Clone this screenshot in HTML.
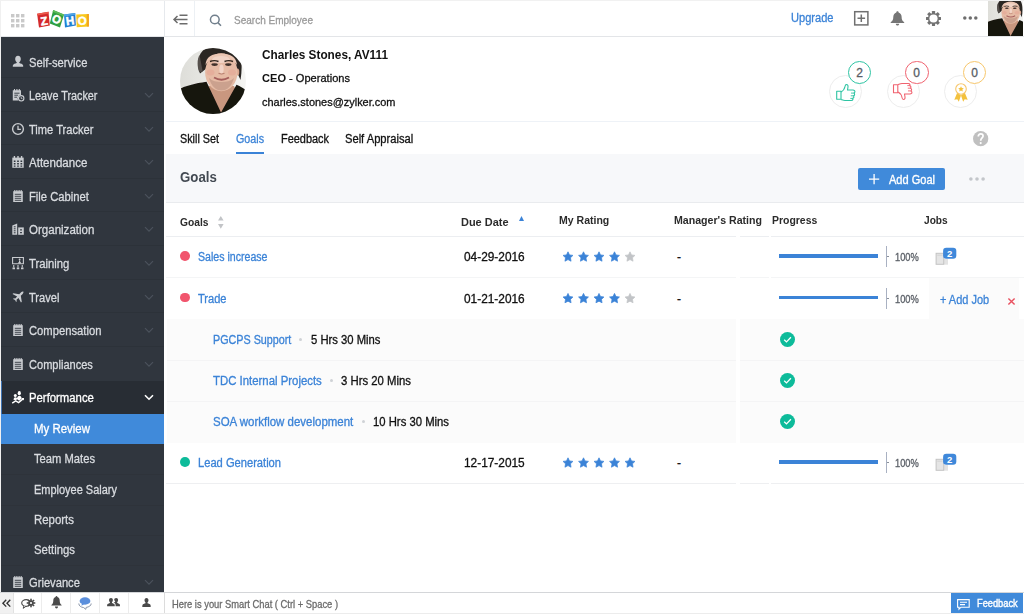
<!DOCTYPE html>
<html><head><meta charset="utf-8"><title>Goals</title>
<style>
*{box-sizing:border-box;margin:0;padding:0}
html,body{width:1024px;height:614px;overflow:hidden;background:#fff;font-family:"Liberation Sans",sans-serif;color:#111}
.a{position:absolute}
svg{position:absolute;overflow:visible}
.t{position:absolute;white-space:nowrap;transform-origin:0 50%;display:block}
#side{position:absolute;left:1px;top:36.5px;width:162.5px;height:556px;background:#30363e;overflow:hidden}
.mi{position:absolute;left:0;width:163px;height:33.6px;border-top:1px solid #2c3239}
.si{position:absolute;left:0;width:163px;height:30.4px;border-top:1px solid #2c3138}
.hl{position:absolute;height:1px;background:#eceef1}
.vl{position:absolute;width:1px;background:#e6e9ed}
.bar{position:absolute;left:779.2px;width:98.4px;height:3.5px;background:#3b83d7}
.tick{position:absolute;left:885.6px;width:1px;height:21px;background:#a9b1c2}
.dash{position:absolute;left:887px;width:2.4px;height:1px;background:#8a909a}
.dot{position:absolute;width:9.8px;height:9.8px;border-radius:50%}
.sdot{position:absolute;width:3px;height:3px;border-radius:50%;background:#cfd2d6}

</style></head><body>
<svg width="0" height="0" style="position:absolute"><defs>
<filter id="bl" x="-5%" y="-5%" width="110%" height="110%"><feGaussianBlur stdDeviation="0.6"/></filter>
<linearGradient id="abg" x1="0" x2="1" y1="0" y2="0"><stop offset="0" stop-color="#dcdcd7"/><stop offset=".6" stop-color="#ecece9"/><stop offset="1" stop-color="#f6f6f4"/></linearGradient>
<g id="face">
<rect x="-4" y="-4" width="74" height="74" fill="url(#abg)"/>
<g filter="url(#bl)">
<path d="M20 25.5C17 18 17.5 8 22.5 3C27 -2 53 -3 58 3C62 8 62.5 20 60.5 32L56 22 27 20z" fill="#2b2624"/>
<path d="M19.5 7c-2.5 4-2.5 12-.3 17l3.5-.5z" fill="#55504c"/>
<path d="M29 38H54L56 42 41 66 27 44z" fill="#c9977f"/>
<ellipse cx="57.5" cy="24" rx="1.8" ry="3.5" fill="#d9a68f"/>
<ellipse cx="41.3" cy="24.3" rx="16.2" ry="19" fill="#e6bba5"/>
<path d="M25.5 17C26 9 32 5.5 41 5.5S56.5 9 57 17C52 10 47 8.5 41 8.5S30 10 25.5 17z" fill="#ebc6b3"/>
<ellipse cx="41" cy="11.5" rx="9" ry="3.5" fill="#f3d8cb" opacity=".85"/>
<ellipse cx="41.5" cy="21" rx="2.2" ry="4.5" fill="#f3d8cc" opacity=".85"/>
<ellipse cx="30.5" cy="24.5" rx="4" ry="3" fill="#e39b8b" opacity=".4"/>
<ellipse cx="52" cy="24.5" rx="4" ry="3" fill="#e39b8b" opacity=".4"/>
<path d="M29 30c2 8 7 12.5 12.5 12.5S52 38 54 30c-3 3-8 4-12.5 4S32 33 29 30z" fill="#b48c7b" opacity=".55"/>
<ellipse cx="34.6" cy="16.6" rx="3.2" ry="1.3" fill="#3f302c"/>
<ellipse cx="48.3" cy="16.6" rx="3.2" ry="1.3" fill="#3f302c"/>
<path d="M30 13.5q4.2-1.8 8.5 0M44.5 13.5q4.2-1.8 8.5 0" stroke="#33271f" stroke-width="1.4" fill="none"/>
<path d="M38.5 25.4q3 1.3 6 0" stroke="#b57c6c" stroke-width="1" fill="none"/>
<path d="M34 29.5q7.5 4.5 15 0" stroke="#a55f5c" stroke-width="1.8" fill="none"/>
<path d="M-4 43C3 38.5 14 35.5 26.5 33.8L41 64.5 56.5 36.8C61 38.5 66 42 70 45V70H-4z" fill="#17130f"/>
</g></g>
</defs></svg>

<!-- ===== top bar ===== -->
<div class="a" style="left:0;top:0;width:1024px;height:36px;background:#fff"></div>
<div class="a" style="left:0;top:36px;width:1024px;height:1px;background:#e3e5e8"></div>
<div class="vl" style="left:163.5px;top:0;height:36px"></div>
<div class="vl" style="left:194px;top:0;height:36px;background:#ecf0f4"></div>
<svg style="left:11.2px;top:13.9px" width="14" height="14" viewBox="0 0 14 14" fill="#c9c9c9"><rect x="0" y="0" width="3.4" height="3.4"/><rect x="5" y="0" width="3.4" height="3.4"/><rect x="10" y="0" width="3.4" height="3.4"/><rect x="0" y="5" width="3.4" height="3.4"/><rect x="5" y="5" width="3.4" height="3.4"/><rect x="10" y="5" width="3.4" height="3.4"/><rect x="0" y="10" width="3.4" height="3.4"/><rect x="5" y="10" width="3.4" height="3.4"/><rect x="10" y="10" width="3.4" height="3.4"/></svg>
<!-- zoho logo -->
<svg style="left:0;top:0" width="100" height="36" viewBox="0 0 100 36">
<path d="M37.1 13.7L48.5 11.7 49.8 25.6 39 27.6z" fill="#d42a2c"/>
<path d="M37.1 13.7L48.5 11.7 48.7 13.4 37.4 15.5z" fill="#ec5a4c"/>
<path d="M53.2 10L64 14.6 60 27.6 49.8 23.4z" fill="#2f9f40"/>
<path d="M53.2 10L64 14.6 63.5 16.3 52.6 11.8z" fill="#5cbb5a"/>
<path d="M64 14.6L75.2 13 75.9 25.6 65 27.6z" fill="#2180d2"/>
<path d="M64 14.6L75.2 13 75.3 14.7 64.1 16.4z" fill="#4fa3e6"/>
<path d="M76.2 14.6L88.9 14 88.9 26.4 76.7 27.3z" fill="#f8c81c"/>
<path d="M86.8 14.1L88.9 14 88.9 26.4 86.8 26.6z" fill="#f2a420"/>
<g fill="#fff" stroke="#fff" stroke-width=".5" font-family="Liberation Sans, sans-serif" font-weight="700" font-size="11.5" text-anchor="middle">
<text x="44" y="25" transform="rotate(-9 44 21)">Z</text>
<text x="56.8" y="23.3" transform="rotate(22 56.8 19)">O</text>
<text x="70.2" y="24.8" transform="rotate(-8 70 21)">H</text>
<text x="82.3" y="24.8" transform="rotate(-3 82 21)">O</text>
</g></svg>
<!-- collapse icon -->
<svg style="left:173px;top:13.6px" width="15" height="11" viewBox="0 0 15 11" fill="none" stroke="#6c6c6c" stroke-width="1.5"><path d="M6.5 1.2H14.5M1 5.5H14.5M6.5 9.8H14.5M4.5 2L1 5.5 4.5 9"/></svg>
<!-- search -->
<svg style="left:209px;top:14.1px" width="13" height="13" viewBox="0 0 13 13" fill="none" stroke="#717f8c" stroke-width="1.5"><circle cx="5.8" cy="5.5" r="4.35"/><path d="M8.9 8.6L12 11.7"/></svg>
<!-- plus box -->
<svg style="left:854.3px;top:10.8px" width="15" height="15" viewBox="0 0 15 15" fill="none" stroke="#707070" stroke-width="1.5"><rect x=".7" y=".7" width="13.2" height="13.2"/><path d="M7.3 3.5V11.1M3.5 7.3H11.1"/></svg>
<!-- bell -->
<svg style="left:889.8px;top:11px" width="15" height="15" viewBox="0 0 15 15" fill="#757575"><path d="M7.5 0.3c.7 0 1.1.5 1.1 1.1 2 .6 3 2.3 3 4.4 0 3 .9 4.2 2.6 5.4v.7H.7v-.7C2.4 10 3.3 8.8 3.3 5.8c0-2.1 1-3.8 3-4.4C6.3.8 6.8.3 7.5.3z"/><path d="M5.8 12.8h3.4c0 1-.8 1.8-1.7 1.8s-1.7-.8-1.7-1.8z"/></svg>
<!-- gear -->
<svg style="left:926px;top:10.5px" width="15" height="15" viewBox="-7.5 -7.5 15 15"><g fill="#727272"><rect x="-1.6" y="-7.5" width="3.2" height="15" rx=".4"/><rect x="-1.6" y="-7.5" width="3.2" height="15" rx=".4" transform="rotate(45)"/><rect x="-1.6" y="-7.5" width="3.2" height="15" rx=".4" transform="rotate(90)"/><rect x="-1.6" y="-7.5" width="3.2" height="15" rx=".4" transform="rotate(135)"/><circle r="5.6"/></g><circle r="4.1" fill="#fff"/></svg>
<!-- top dots -->
<svg style="left:962.7px;top:16.1px" width="15" height="4" viewBox="0 0 15 4" fill="#6e6e6e"><circle cx="1.8" cy="1.9" r="1.75"/><circle cx="7.3" cy="1.9" r="1.75"/><circle cx="12.8" cy="1.9" r="1.75"/></svg>
<!-- small avatar -->
<svg style="left:987.5px;top:.8px;overflow:hidden" width="35.3" height="35" viewBox="1.9 4 61.2 60.7"><use href="#face"/></svg>

<!-- ===== sidebar ===== -->
<div id="side">
<svg style="left:10px;top:18.5px" width="14" height="14" viewBox="0 0 14 14"><path d="M7 .7c1.9 0 2.8 1.4 2.8 3.2 0 1.3-.6 2.6-1.5 3.2v.9c1.5.5 3.4 1.1 3.7 2 .2.6.2 1.7.2 1.7H1.8c0 0 0-1.1.2-1.7.3-.9 2.2-1.5 3.7-2v-.9C4.8 6.5 4.2 5.2 4.2 3.9 4.2 2.1 5.1.7 7 .7z" fill="#c9ccd0"/></svg>
<div class="mi" style="top:40.6px"></div>
<svg style="left:10px;top:51.5px" width="14" height="14" viewBox="0 0 14 14"><path d="M1.8 2.3h8.2v4.8a3.6 3.6 0 0 0-2.8 5.4H1.8z" fill="#c9ccd0"/><path d="M3.5 1v2M5.9 1v2M8.3 1v2" stroke="#c9ccd0" stroke-width="1.1"/><path d="M3.3 5.2h5.2M3.3 7.2h3.8M3.3 9.2h2.8" stroke="#30363e" stroke-width=".9"/><circle cx="10.2" cy="10.3" r="2.7" fill="none" stroke="#c9ccd0" stroke-width="1.1"/><path d="M10.2 9v1.5h1.2" stroke="#c9ccd0" stroke-width=".8" fill="none"/></svg>
<svg style="left:143px;top:55.0px" width="10" height="7" viewBox="0 0 10 7"><path d="M1 1.2L5 5.2 9 1.2" fill="none" stroke="#4b525c" stroke-width="1.2"/></svg>
<div class="mi" style="top:74.6px"></div>
<svg style="left:10px;top:85.5px" width="14" height="14" viewBox="0 0 14 14"><circle cx="7" cy="7" r="5.4" fill="none" stroke="#c9ccd0" stroke-width="1.4"/><path d="M7 3.7v3.6h2.9" stroke="#c9ccd0" stroke-width="1.3" fill="none"/></svg>
<svg style="left:143px;top:89.0px" width="10" height="7" viewBox="0 0 10 7"><path d="M1 1.2L5 5.2 9 1.2" fill="none" stroke="#4b525c" stroke-width="1.2"/></svg>
<div class="mi" style="top:107.6px"></div>
<svg style="left:10px;top:118.5px" width="14" height="14" viewBox="0 0 14 14"><path d="M1.3 2.6h11.4v10.2H1.3z" fill="#c9ccd0"/><path d="M3.4 1v2.5M7 1v2.5M10.6 1v2.5" stroke="#c9ccd0" stroke-width="1.4"/><path d="M2.8 5.4h1.7v1.5H2.8zM6.15 5.4h1.7v1.5H6.15zM9.5 5.4h1.7v1.5H9.5zM2.8 7.9h1.7v1.5H2.8zM6.15 7.9h1.7v1.5H6.15zM9.5 7.9h1.7v1.5H9.5zM2.8 10.4h1.7v1.4H2.8zM6.15 10.4h1.7v1.4H6.15zM9.5 10.4h1.7v1.4H9.5z" fill="#30363e"/></svg>
<svg style="left:143px;top:122.0px" width="10" height="7" viewBox="0 0 10 7"><path d="M1 1.2L5 5.2 9 1.2" fill="none" stroke="#4b525c" stroke-width="1.2"/></svg>
<div class="mi" style="top:141.6px"></div>
<svg style="left:10px;top:152.5px" width="14" height="14" viewBox="0 0 14 14"><path d="M2.2 2.2h9.6v10.8H2.2z" fill="#c9ccd0"/><path d="M3.8 1v2M5.9 1v2M8.1 1v2M10.2 1v2" stroke="#c9ccd0" stroke-width="1.1"/><path d="M3.8 5.3h6.4M3.8 7.3h6.4M3.8 9.3h6.4M3.8 11.3h6.4" stroke="#30363e" stroke-width=".9"/></svg>
<svg style="left:143px;top:156.0px" width="10" height="7" viewBox="0 0 10 7"><path d="M1 1.2L5 5.2 9 1.2" fill="none" stroke="#4b525c" stroke-width="1.2"/></svg>
<div class="mi" style="top:174.6px"></div>
<svg style="left:10px;top:185.5px" width="14" height="14" viewBox="0 0 14 14"><path d="M1.3 3.6L6.2 1.4V12.8H1.3z" fill="#c9ccd0"/><path d="M7.2 5.4h5.6v7.4H7.2z" fill="#c9ccd0"/><path d="M2.8 4.8h1.8M2.8 6.8h1.8M2.8 8.8h1.8M2.8 10.8h1.8" stroke="#30363e" stroke-width="1"/><path d="M9.1 7.3h1.8v1.3H9.1zM9.1 9.9h1.8v1.3H9.1z" fill="#30363e"/></svg>
<svg style="left:143px;top:189.0px" width="10" height="7" viewBox="0 0 10 7"><path d="M1 1.2L5 5.2 9 1.2" fill="none" stroke="#4b525c" stroke-width="1.2"/></svg>
<div class="mi" style="top:208.6px"></div>
<svg style="left:10px;top:219.5px" width="14" height="14" viewBox="0 0 14 14"><path d="M1.6 1.5h10.8v6.3H1.6z" fill="none" stroke="#c9ccd0" stroke-width="1.1"/><path d="M8.6 4.4v2.4M7.2 6.9h2.8" stroke="#c9ccd0" stroke-width="1.2"/><circle cx="8.6" cy="3.5" r=".9" fill="#c9ccd0"/><path d="M1.5 13.3v-1.7h2.5v1.7zM5.75 13.3v-1.7h2.5v1.7zM10 13.3v-1.7h2.5v1.7z" fill="#c9ccd0"/><path d="M2.75 9v2.4M7 9v2.4M11.25 9v2.4" stroke="#c9ccd0" stroke-width="1.1"/></svg>
<svg style="left:143px;top:223.0px" width="10" height="7" viewBox="0 0 10 7"><path d="M1 1.2L5 5.2 9 1.2" fill="none" stroke="#4b525c" stroke-width="1.2"/></svg>
<div class="mi" style="top:242.6px"></div>
<svg style="left:10px;top:253.5px" width="14" height="14" viewBox="0 0 14 14"><g transform="translate(.6 .8) scale(.92)"><path d="M12.9 1.1c-.6-.6-1.9-.1-2.6.6L8.3 3.7 1.9 2.6l-.9.9 5 2.7-2 2.2-1.7-.3-.7.7 2.2 1.1 1.1 2.2.7-.7-.3-1.7 2.2-2 2.7 5 .9-.9-1.1-6.4 2-2c.7-.7 1.2-2 .6-2.6z" fill="#c9ccd0"/></g></svg>
<svg style="left:143px;top:257.0px" width="10" height="7" viewBox="0 0 10 7"><path d="M1 1.2L5 5.2 9 1.2" fill="none" stroke="#4b525c" stroke-width="1.2"/></svg>
<div class="mi" style="top:275.6px"></div>
<svg style="left:10px;top:286.5px" width="14" height="14" viewBox="0 0 14 14"><path d="M2.2 2.2h9.6v10.8H2.2z" fill="#c9ccd0"/><path d="M3.8 1v2M5.9 1v2M8.1 1v2M10.2 1v2" stroke="#c9ccd0" stroke-width="1.1"/><path d="M3.8 5.3h6.4M3.8 7.3h6.4M3.8 9.3h6.4M3.8 11.3h6.4" stroke="#30363e" stroke-width=".9"/></svg>
<svg style="left:143px;top:290.0px" width="10" height="7" viewBox="0 0 10 7"><path d="M1 1.2L5 5.2 9 1.2" fill="none" stroke="#4b525c" stroke-width="1.2"/></svg>
<div class="mi" style="top:309.6px"></div>
<svg style="left:10px;top:320.5px" width="14" height="14" viewBox="0 0 14 14"><path d="M2.2 2.2h9.6v10.8H2.2z" fill="#c9ccd0"/><path d="M3.8 1v2M5.9 1v2M8.1 1v2M10.2 1v2" stroke="#c9ccd0" stroke-width="1.1"/><path d="M3.8 5.3h6.4M3.8 7.3h6.4M3.8 9.3h6.4M3.8 11.3h6.4" stroke="#30363e" stroke-width=".9"/></svg>
<svg style="left:143px;top:324.0px" width="10" height="7" viewBox="0 0 10 7"><path d="M1 1.2L5 5.2 9 1.2" fill="none" stroke="#4b525c" stroke-width="1.2"/></svg>
<div class="a" style="left:0;top:344.0px;width:163px;height:33.2px;background:#282d34"></div>
<div class="a" style="left:0;top:344.0px;width:1px;height:33.2px;background:#3f74b3"></div>
<svg style="left:10px;top:353.0px" width="14" height="14" viewBox="0 0 14 14"><ellipse cx="8.3" cy="3.2" rx="1.6" ry="2.1" fill="#fff"/><circle cx="4.3" cy="5.4" r="1.5" fill="#fff"/><path d="M2.5 9.8c.2-1.7 1-2.5 1.9-2.5.8 0 1.3.4 1.6 1 .4-1.7 1.2-2.6 2.3-2.6 1.4 0 2.2 1.2 2.4 2.8L8.2 10.7 6.2 9.3 4.6 10.3z" fill="#fff"/><path d="M1.2 13.2L4.7 10.8 7.6 12.6 12.3 8.6" stroke="#fff" stroke-width="1.4" fill="none"/><path d="M10.4 8.1l2.6-.2-.2 2.6z" fill="#fff"/></svg>
<svg style="left:143px;top:357.2px" width="10" height="7" viewBox="0 0 10 7"><path d="M1 1.2L5 5.2 9 1.2" fill="none" stroke="#fff" stroke-width="1.6"/></svg>
<div class="a" style="left:0;top:377.2px;width:163px;height:30px;background:#408ada"></div>
<div class="a" style="left:0;top:437.5px;width:163px;height:1px;background:#2e333a"></div>
<div class="a" style="left:0;top:468.0px;width:163px;height:1px;background:#2e333a"></div>
<div class="a" style="left:0;top:498.5px;width:163px;height:1px;background:#2e333a"></div>
<div class="a" style="left:0;top:528.8px;width:163px;height:1px;background:#2e333a"></div>
<svg style="left:10px;top:538.5px" width="14" height="14" viewBox="0 0 14 14"><path d="M2.2 2.2h9.6v10.8H2.2z" fill="#c9ccd0"/><path d="M3.8 1v2M5.9 1v2M8.1 1v2M10.2 1v2" stroke="#c9ccd0" stroke-width="1.1"/><path d="M3.8 5.3h6.4M3.8 7.3h6.4M3.8 9.3h6.4M3.8 11.3h6.4" stroke="#30363e" stroke-width=".9"/></svg>
<svg style="left:143px;top:542.0px" width="10" height="7" viewBox="0 0 10 7"><path d="M1 1.2L5 5.2 9 1.2" fill="none" stroke="#4b525c" stroke-width="1.2"/></svg>
</div>
<div class="a" style="left:0;top:0;width:1px;height:614px;background:#f0f0f0"></div>
<div class="a" style="left:0;top:0;width:1024px;height:1px;background:#f1f1f1"></div>

<!-- ===== profile ===== -->
<svg style="left:179.5px;top:47.5px;overflow:hidden;border-radius:50%" width="66" height="66" viewBox="0 0 66 66"><use href="#face"/></svg>
<div class="hl" style="left:166px;top:120.5px;width:858px;background:#eef2f7"></div>
<div class="a" style="left:829.1px;top:74.6px;width:33px;height:33px;border-radius:50%;border:1px solid #ededed;background:#fff"></div>
<svg style="left:835.5px;top:84px" width="20" height="16" viewBox="0 0 20 16" fill="none" stroke="#2ec4a3" stroke-width="1.1" stroke-linejoin="round"><path d="M.7 7.2h4.3v8H.7z"/><path d="M5 8c2-1 3.5-3 4-5.5.2-1.4.6-2 1.5-2 1.2 0 1.7 1 1.5 2.5L11.5 6h5.5c1.3 0 2 .8 1.9 1.8-.1.7-.5 1.1-1.1 1.3.6.3.9.8.8 1.5-.1.7-.6 1.1-1.2 1.2.4.4.6.8.5 1.4-.1.7-.7 1.1-1.3 1.2.3.3.4.7.3 1.1-.2.8-.9 1-1.7 1H9c-1.5 0-2.5-.5-4-1"/><path d="M15 9.1h2.6M14.8 11.8h2.4M14.3 14.4h2.2" stroke-width=".9"/></svg>
<div class="a" style="left:847.8px;top:60.7px;width:23.4px;height:23.4px;border-radius:50%;border:1.2px solid #2ec4a3;background:#fff"></div>
<svg style="left:848.0px;top:60.7px" width="23" height="23" viewBox="0 0 23 23"><text x="11.5" y="16.4" text-anchor="middle" font-family="Liberation Sans, sans-serif" font-size="12" fill="#575d66" stroke="#575d66" stroke-width=".3">2</text></svg>
<div class="a" style="left:886.5px;top:74.6px;width:33px;height:33px;border-radius:50%;border:1px solid #ededed;background:#fff"></div>
<svg style="left:892.5px;top:83.7px" width="20" height="16" viewBox="0 0 20 16" fill="none" stroke="#f0626f" stroke-width="1.1" stroke-linejoin="round"><g transform="translate(20 16) rotate(180)"><path d="M.7 7.2h4.3v8H.7z" transform="translate(14.5 0)"/><path d="M15 8c-2-1-3.5-3-4-5.5C10.8 1.1 10.4.5 9.5.5 8.3.5 7.8 1.5 8 3L8.5 6H3C1.7 6 1 6.8 1.1 7.8c.1.7.5 1.1 1.1 1.3-.6.3-.9.8-.8 1.5.1.7.6 1.1 1.2 1.2-.4.4-.6.8-.5 1.4.1.7.7 1.1 1.3 1.2-.3.3-.4.7-.3 1.1.2.8.9 1 1.7 1H11c1.5 0 2.5-.5 4-1"/><path d="M5 9.1H2.4M5.2 11.8H2.8M5.7 14.4H3.5" stroke-width=".9"/></g></svg>
<div class="a" style="left:905.2px;top:60.7px;width:23.4px;height:23.4px;border-radius:50%;border:1.2px solid #f0626f;background:#fff"></div>
<svg style="left:905.4px;top:60.7px" width="23" height="23" viewBox="0 0 23 23"><text x="11.5" y="16.4" text-anchor="middle" font-family="Liberation Sans, sans-serif" font-size="12" fill="#575d66" stroke="#575d66" stroke-width=".3">0</text></svg>
<div class="a" style="left:943.6px;top:74.6px;width:33px;height:33px;border-radius:50%;border:1px solid #ededed;background:#fff"></div>
<svg style="left:953.6px;top:83px" width="14" height="19" viewBox="0 0 14 19"><path d="M3.3 9.5L.3 16.8 3.3 16.2 4.8 18.8 7 12.5zM10.7 9.5L13.7 16.8 10.7 16.2 9.2 18.8 7 12.5z" fill="#f3c13c"/><circle cx="7" cy="6" r="5.3" fill="#fff" stroke="#f7c76c" stroke-width="1.1"/><path d="M7 3.2l.85 1.8 1.95.25-1.4 1.35.35 1.95L7 7.6l-1.75.95.35-1.95-1.4-1.35 1.95-.25z" fill="#f3c13c"/></svg>
<div class="a" style="left:962.7px;top:60.7px;width:23.4px;height:23.4px;border-radius:50%;border:1.2px solid #f7c76c;background:#fff"></div>
<svg style="left:962.9px;top:60.7px" width="23" height="23" viewBox="0 0 23 23"><text x="11.5" y="16.4" text-anchor="middle" font-family="Liberation Sans, sans-serif" font-size="12" fill="#575d66" stroke="#575d66" stroke-width=".3">0</text></svg>
<!-- help -->
<svg style="left:972.7px;top:130.9px" width="15.3" height="15.3" viewBox="0 0 15.3 15.3"><circle cx="7.65" cy="7.65" r="7.65" fill="#c0c0c0"/><path d="M5.3 5.5C5.3 3.7 6.3 2.9 7.7 2.9 9.2 2.9 10.1 3.8 10.1 5 10.1 6.9 7.7 7.1 7.7 9.7" fill="none" stroke="#fff" stroke-width="1.7"/><circle cx="7.7" cy="12.1" r="1.05" fill="#fff"/></svg>
<!-- tab underline -->
<div class="a" style="left:235.5px;top:152.3px;width:28.3px;height:2px;background:#3b83d7"></div>

<!-- ===== goals band ===== -->
<div class="a" style="left:165.5px;top:154.3px;width:858.5px;height:48px;background:#f7f8fa"></div>
<div class="hl" style="left:166px;top:202.2px;width:858px;background:#e9ebee"></div>
<div class="a" style="left:857.6px;top:168px;width:87.9px;height:21.5px;background:#408ada;border-radius:2px"></div>
<svg style="left:869.4px;top:173.9px" width="10.2" height="10.2" viewBox="0 0 10.2 10.2" stroke="#fff" stroke-width="1.3"><path d="M5.1 0V10.2M0 5.1H10.2"/></svg>
<svg style="left:969px;top:177px" width="16" height="4" viewBox="0 0 16 4" fill="#c3c6ca"><circle cx="1.9" cy="2" r="1.8"/><circle cx="8" cy="2" r="1.8"/><circle cx="14.1" cy="2" r="1.8"/></svg>

<!-- ===== table ===== -->
<svg style="left:218.3px;top:216.1px" width="5.6" height="12.7" viewBox="0 0 5.6 12.7" fill="#c2c4c7"><path d="M2.8 0L5.6 4.6H0zM2.8 12.7L5.6 8H0z"/></svg>
<svg style="left:519.3px;top:216.1px" width="5" height="5" viewBox="0 0 5 5" fill="#3b83d7"><path d="M2.5 0L5 5H0z"/></svg>
<div class="hl" style="left:166px;top:235.7px;width:858px"></div>
<div class="hl" style="left:166px;top:277px;width:858px;background:#f4f5f6"></div>
<div class="hl" style="left:166px;top:483px;width:858px;background:#eeeff1"></div>
<!-- sub rows bg -->
<div class="a" style="left:166.5px;top:319px;width:857.5px;height:124px;background:#fbfbfb"></div>
<div class="a" style="left:929.2px;top:278px;width:89.6px;height:41px;background:#fbfbfb"></div>
<div class="hl" style="left:166.5px;top:360px;width:857.5px;background:#f4f4f5"></div>
<div class="hl" style="left:166.5px;top:400.7px;width:857.5px;background:#f4f4f5"></div>
<div class="a" style="left:735.8px;top:235px;width:4.4px;height:249px;background:#fff"></div>
<div class="a" style="left:769.3px;top:235px;width:1.5px;height:3px;background:#fff"></div>
<div class="a" style="left:769.3px;top:276px;width:1.5px;height:3px;background:#fff"></div>
<div class="a" style="left:769.3px;top:482px;width:1.5px;height:3px;background:#fff"></div>
<div class="dot" style="left:179.8px;top:251.1px;background:#f1556d"></div>
<svg style="left:0;top:0" width="1024" height="614"><polygon points="568.00,251.80 569.53,254.90 572.95,255.39 570.47,257.80 571.06,261.21 568.00,259.60 564.94,261.21 565.53,257.80 563.05,255.39 566.47,254.90" fill="#3b83d7" stroke="#3b83d7" stroke-width=".7" stroke-linejoin="round"/><polygon points="583.50,251.80 585.03,254.90 588.45,255.39 585.97,257.80 586.56,261.21 583.50,259.60 580.44,261.21 581.03,257.80 578.55,255.39 581.97,254.90" fill="#3b83d7" stroke="#3b83d7" stroke-width=".7" stroke-linejoin="round"/><polygon points="599.00,251.80 600.53,254.90 603.95,255.39 601.47,257.80 602.06,261.21 599.00,259.60 595.94,261.21 596.53,257.80 594.05,255.39 597.47,254.90" fill="#3b83d7" stroke="#3b83d7" stroke-width=".7" stroke-linejoin="round"/><polygon points="614.50,251.80 616.03,254.90 619.45,255.39 616.97,257.80 617.56,261.21 614.50,259.60 611.44,261.21 612.03,257.80 609.55,255.39 612.97,254.90" fill="#3b83d7" stroke="#3b83d7" stroke-width=".7" stroke-linejoin="round"/><polygon points="630.00,251.80 631.53,254.90 634.95,255.39 632.47,257.80 633.06,261.21 630.00,259.60 626.94,261.21 627.53,257.80 625.05,255.39 628.47,254.90" fill="#c2c4c7" stroke="#c2c4c7" stroke-width=".7" stroke-linejoin="round"/></svg>
<div class="bar" style="top:254.2px"></div>
<div class="tick" style="top:246.1px"></div>
<div class="dash" style="top:256.2px"></div>
<svg style="left:935px;top:247.9px" width="24" height="18" viewBox="0 0 24 18"><path d="M9 10.8h4v5.9H9z" fill="#e3e3e3"/><rect x="1.1" y="5.3" width="7.6" height="11" fill="#e5e5e5" stroke="#c3c3c3" stroke-width="1"/><path d="M2.3 7.2h5.2" stroke="#d2d2d2" stroke-width="1"/><rect x="8.1" y="-.2" width="13.2" height="11" rx="3.2" fill="#3f88da"/><text x="14.7" y="8.7" text-anchor="middle" font-family="Liberation Sans, sans-serif" font-weight="700" font-size="9.5" fill="#fff">2</text></svg>
<div class="dot" style="left:179.8px;top:292.7px;background:#f1556d"></div>
<svg style="left:0;top:0" width="1024" height="614"><polygon points="568.00,293.40 569.53,296.50 572.95,296.99 570.47,299.40 571.06,302.81 568.00,301.20 564.94,302.81 565.53,299.40 563.05,296.99 566.47,296.50" fill="#3b83d7" stroke="#3b83d7" stroke-width=".7" stroke-linejoin="round"/><polygon points="583.50,293.40 585.03,296.50 588.45,296.99 585.97,299.40 586.56,302.81 583.50,301.20 580.44,302.81 581.03,299.40 578.55,296.99 581.97,296.50" fill="#3b83d7" stroke="#3b83d7" stroke-width=".7" stroke-linejoin="round"/><polygon points="599.00,293.40 600.53,296.50 603.95,296.99 601.47,299.40 602.06,302.81 599.00,301.20 595.94,302.81 596.53,299.40 594.05,296.99 597.47,296.50" fill="#3b83d7" stroke="#3b83d7" stroke-width=".7" stroke-linejoin="round"/><polygon points="614.50,293.40 616.03,296.50 619.45,296.99 616.97,299.40 617.56,302.81 614.50,301.20 611.44,302.81 612.03,299.40 609.55,296.99 612.97,296.50" fill="#3b83d7" stroke="#3b83d7" stroke-width=".7" stroke-linejoin="round"/><polygon points="630.00,293.40 631.53,296.50 634.95,296.99 632.47,299.40 633.06,302.81 630.00,301.20 626.94,302.81 627.53,299.40 625.05,296.99 628.47,296.50" fill="#c2c4c7" stroke="#c2c4c7" stroke-width=".7" stroke-linejoin="round"/></svg>
<div class="bar" style="top:295.8px"></div>
<div class="tick" style="top:287.7px"></div>
<div class="dash" style="top:297.8px"></div>
<div class="dot" style="left:179.8px;top:457.1px;background:#0dbb9a"></div>
<svg style="left:0;top:0" width="1024" height="614"><polygon points="568.00,457.80 569.53,460.90 572.95,461.39 570.47,463.80 571.06,467.21 568.00,465.60 564.94,467.21 565.53,463.80 563.05,461.39 566.47,460.90" fill="#3b83d7" stroke="#3b83d7" stroke-width=".7" stroke-linejoin="round"/><polygon points="583.50,457.80 585.03,460.90 588.45,461.39 585.97,463.80 586.56,467.21 583.50,465.60 580.44,467.21 581.03,463.80 578.55,461.39 581.97,460.90" fill="#3b83d7" stroke="#3b83d7" stroke-width=".7" stroke-linejoin="round"/><polygon points="599.00,457.80 600.53,460.90 603.95,461.39 601.47,463.80 602.06,467.21 599.00,465.60 595.94,467.21 596.53,463.80 594.05,461.39 597.47,460.90" fill="#3b83d7" stroke="#3b83d7" stroke-width=".7" stroke-linejoin="round"/><polygon points="614.50,457.80 616.03,460.90 619.45,461.39 616.97,463.80 617.56,467.21 614.50,465.60 611.44,467.21 612.03,463.80 609.55,461.39 612.97,460.90" fill="#3b83d7" stroke="#3b83d7" stroke-width=".7" stroke-linejoin="round"/><polygon points="630.00,457.80 631.53,460.90 634.95,461.39 632.47,463.80 633.06,467.21 630.00,465.60 626.94,467.21 627.53,463.80 625.05,461.39 628.47,460.90" fill="#3b83d7" stroke="#3b83d7" stroke-width=".7" stroke-linejoin="round"/></svg>
<div class="bar" style="top:460.2px"></div>
<div class="tick" style="top:452.1px"></div>
<div class="dash" style="top:462.2px"></div>
<svg style="left:935px;top:453.9px" width="24" height="18" viewBox="0 0 24 18"><path d="M9 10.8h4v5.9H9z" fill="#e3e3e3"/><rect x="1.1" y="5.3" width="7.6" height="11" fill="#e5e5e5" stroke="#c3c3c3" stroke-width="1"/><path d="M2.3 7.2h5.2" stroke="#d2d2d2" stroke-width="1"/><rect x="8.1" y="-.2" width="13.2" height="11" rx="3.2" fill="#3f88da"/><text x="14.7" y="8.7" text-anchor="middle" font-family="Liberation Sans, sans-serif" font-weight="700" font-size="9.5" fill="#fff">2</text></svg>
<svg style="left:1007.5px;top:297.6px" width="7" height="7" viewBox="0 0 7 7" stroke="#e9505f" stroke-width="1.4"><path d="M.4.4L6.6 6.6M6.6.4L.4 6.6"/></svg>
<div class="sdot" style="left:299.0px;top:338.4px"></div>
<svg style="left:780px;top:332.2px" width="15" height="15" viewBox="0 0 15 15"><circle cx="7.5" cy="7.5" r="7.5" fill="#0dbb9a"/><path d="M4.2 7.7L6.5 9.9 10.9 5.3" fill="none" stroke="#fff" stroke-width="1.3"/></svg>
<div class="sdot" style="left:329.5px;top:379.4px"></div>
<svg style="left:780px;top:373.2px" width="15" height="15" viewBox="0 0 15 15"><circle cx="7.5" cy="7.5" r="7.5" fill="#0dbb9a"/><path d="M4.2 7.7L6.5 9.9 10.9 5.3" fill="none" stroke="#fff" stroke-width="1.3"/></svg>
<div class="sdot" style="left:361.5px;top:420.4px"></div>
<svg style="left:780px;top:414.2px" width="15" height="15" viewBox="0 0 15 15"><circle cx="7.5" cy="7.5" r="7.5" fill="#0dbb9a"/><path d="M4.2 7.7L6.5 9.9 10.9 5.3" fill="none" stroke="#fff" stroke-width="1.3"/></svg>
<!-- ===== bottom bar ===== -->
<div class="a" style="left:0;top:592.3px;width:1024px;height:21.7px;background:#fff"></div>
<div class="a" style="left:0;top:592.3px;width:1024px;height:1px;background:#d4d6d9"></div>
<div class="a" style="left:0;top:613px;width:1024px;height:1px;background:#ececec"></div>
<div class="a" style="left:0;top:593px;width:13.2px;height:20px;background:#f1f1f1"></div>
<div class="vl" style="left:13.2px;top:593px;height:20px;background:#e2e2e2"></div>
<div class="vl" style="left:41.4px;top:593px;height:20px;background:#ececec"></div>
<div class="vl" style="left:70.2px;top:593px;height:20px;background:#ececec"></div>
<div class="vl" style="left:98.8px;top:593px;height:20px;background:#ececec"></div>
<div class="vl" style="left:128px;top:593px;height:20px;background:#ececec"></div>
<div class="vl" style="left:163.5px;top:593px;height:20px;background:#dcdcdc"></div>
<svg style="left:2.2px;top:598.8px" width="9.2" height="8.5" viewBox="0 0 10 9" fill="none" stroke="#333" stroke-width="1.5"><path d="M4.6.6L1 4.4 4.6 8.2M9 .6L5.4 4.4 9 8.2"/></svg>
<svg style="left:21px;top:598px" width="15" height="11" viewBox="0 0 15 11"><ellipse cx="5.2" cy="5" rx="4.5" ry="3.4" fill="none" stroke="#4a4a4a" stroke-width="1.1"/><path d="M3 7.8L2.2 10.3 5 8.3" fill="#fff" stroke="#4a4a4a" stroke-width="1"/><g transform="translate(10 5)" fill="#4a4a4a"><circle r="2.6"/><rect x="-.8" y="-4.3" width="1.6" height="8.6"/><rect x="-.8" y="-4.3" width="1.6" height="8.6" transform="rotate(45)"/><rect x="-.8" y="-4.3" width="1.6" height="8.6" transform="rotate(90)"/><rect x="-.8" y="-4.3" width="1.6" height="8.6" transform="rotate(135)"/></g><circle cx="10" cy="5" r="1.1" fill="#fff"/></svg>
<svg style="left:50.8px;top:596.3px" width="11" height="13" viewBox="0 0 11 13" fill="#4a4a4a"><path d="M5.5 0c.6 0 .9.4.9.9 1.5.5 2.3 1.8 2.3 3.5 0 2.5.6 3.5 1.9 4.5v.7H.4v-.7C1.7 7.9 2.3 6.9 2.3 4.4c0-1.7.8-3 2.3-3.5C4.6.4 4.9 0 5.5 0z"/><path d="M4 10.4h3c0 1.2-.7 2-1.5 2s-1.5-.8-1.5-2z"/></svg>
<svg style="left:77.5px;top:596.5px" width="14" height="13" viewBox="0 0 14 13"><path d="M.8 6.5C.8 8.8 3 10.3 5.5 10.5L7.8 12.3 8.2 10.4C11 10 13.2 8.6 13.2 6.5" fill="none" stroke="#8c96a8" stroke-width="1"/><ellipse cx="7" cy="4" rx="5.4" ry="3.7" fill="#5b8fdc"/><path d="M4 6.5L3.3 8.8 6.3 7.3z" fill="#5b8fdc"/></svg>
<svg style="left:107px;top:597.9px" width="13" height="10" viewBox="0 0 13 10" fill="#4a4a4a"><path d="M4 0c1.2 0 1.9.9 1.9 2.1 0 .9-.4 1.7-.9 2.2v.6c1 .4 2.4.8 2.6 1.5.2.5.2 1.8.2 1.8H.1s0-1.3.2-1.8c.2-.7 1.6-1.1 2.6-1.5v-.6c-.5-.5-.9-1.3-.9-2.2C2 .9 2.8 0 4 0z"/><path d="M9.2 0c1.2 0 1.9.9 1.9 2.1 0 .9-.4 1.7-.9 2.2v.6c1 .4 2.4.8 2.6 1.5.2.5.2 1.8.2 1.8H8.6c0-1 0-2-.5-2.6-.3-.4-.9-.7-1.5-1 .5-.2 1-.4 1.5-.6v-.6c-.5-.5-.9-1.3-.9-2.2C7.2.9 8 0 9.2 0z"/></svg>
<svg style="left:141.5px;top:597.8px" width="9" height="10" viewBox="0 0 9 10" fill="#4a4a4a"><path d="M4.5 0c1.3 0 2 1 2 2.3 0 1-.4 1.8-1 2.3v.7c1.1.4 2.7.8 3 1.6.2.5.2 2 .2 2H.3s0-1.5.2-2c.3-.8 1.9-1.2 3-1.6v-.7c-.6-.5-1-1.3-1-2.3C2.5 1 3.2 0 4.5 0z"/></svg>
<div class="a" style="left:951px;top:592.5px;width:72.3px;height:20.8px;background:#408ada"></div>
<svg style="left:957.4px;top:598.8px" width="13" height="11" viewBox="0 0 13 11" fill="none" stroke="#fff" stroke-width="1.1"><path d="M.6.6H12.2V8.2H4L2 10.2V8.2H.6z"/><path d="M3 3.3H10M3 5.6H8"/></svg>

<div id="texts">
<span class="t" id="t0" style="left:28.6px;top:55.50px;font-size:12.5px;line-height:15.00px;color:#d9dce0;font-weight:400;transform:scaleX(0.8944);-webkit-text-stroke:.3px currentColor;">Self-service</span>
<span class="t" id="t1" style="left:28.6px;top:88.50px;font-size:12.5px;line-height:15.00px;color:#d9dce0;font-weight:400;transform:scaleX(0.8634);-webkit-text-stroke:.3px currentColor;">Leave Tracker</span>
<span class="t" id="t2" style="left:28.6px;top:122.50px;font-size:12.5px;line-height:15.00px;color:#d9dce0;font-weight:400;transform:scaleX(0.8887);-webkit-text-stroke:.3px currentColor;">Time Tracker</span>
<span class="t" id="t3" style="left:28.6px;top:155.50px;font-size:12.5px;line-height:15.00px;color:#d9dce0;font-weight:400;transform:scaleX(0.9233);-webkit-text-stroke:.3px currentColor;">Attendance</span>
<span class="t" id="t4" style="left:28.6px;top:189.50px;font-size:12.5px;line-height:15.00px;color:#d9dce0;font-weight:400;transform:scaleX(0.8980);-webkit-text-stroke:.3px currentColor;">File Cabinet</span>
<span class="t" id="t5" style="left:28.6px;top:222.50px;font-size:12.5px;line-height:15.00px;color:#d9dce0;font-weight:400;transform:scaleX(0.9228);-webkit-text-stroke:.3px currentColor;">Organization</span>
<span class="t" id="t6" style="left:28.6px;top:256.50px;font-size:12.5px;line-height:15.00px;color:#d9dce0;font-weight:400;transform:scaleX(0.9037);-webkit-text-stroke:.3px currentColor;">Training</span>
<span class="t" id="t7" style="left:28.6px;top:290.50px;font-size:12.5px;line-height:15.00px;color:#d9dce0;font-weight:400;transform:scaleX(0.8872);-webkit-text-stroke:.3px currentColor;">Travel</span>
<span class="t" id="t8" style="left:28.6px;top:323.50px;font-size:12.5px;line-height:15.00px;color:#d9dce0;font-weight:400;transform:scaleX(0.8982);-webkit-text-stroke:.3px currentColor;">Compensation</span>
<span class="t" id="t9" style="left:28.6px;top:357.50px;font-size:12.5px;line-height:15.00px;color:#d9dce0;font-weight:400;transform:scaleX(0.8842);-webkit-text-stroke:.3px currentColor;">Compliances</span>
<span class="t" id="t10" style="left:28.6px;top:575.50px;font-size:12.5px;line-height:15.00px;color:#d9dce0;font-weight:400;transform:scaleX(0.8932);-webkit-text-stroke:.3px currentColor;">Grievance</span>
<span class="t" id="t11" style="left:28.6px;top:390.50px;font-size:12.5px;line-height:15.00px;color:#fff;font-weight:400;transform:scaleX(0.9069);-webkit-text-stroke:.3px currentColor;">Performance</span>
<span class="t" id="t12" style="left:34px;top:421.60px;font-size:12.5px;line-height:15.00px;color:#fff;font-weight:400;transform:scaleX(0.9162);-webkit-text-stroke:.3px currentColor;">My Review</span>
<span class="t" id="t13" style="left:34px;top:452.10px;font-size:12.5px;line-height:15.00px;color:#d9dce0;font-weight:400;transform:scaleX(0.8958);-webkit-text-stroke:.3px currentColor;">Team Mates</span>
<span class="t" id="t14" style="left:34px;top:482.60px;font-size:12.5px;line-height:15.00px;color:#d9dce0;font-weight:400;transform:scaleX(0.8783);-webkit-text-stroke:.3px currentColor;">Employee Salary</span>
<span class="t" id="t15" style="left:34px;top:512.80px;font-size:12.5px;line-height:15.00px;color:#d9dce0;font-weight:400;transform:scaleX(0.9136);-webkit-text-stroke:.3px currentColor;">Reports</span>
<span class="t" id="t16" style="left:34px;top:543.10px;font-size:12.5px;line-height:15.00px;color:#d9dce0;font-weight:400;transform:scaleX(0.9076);-webkit-text-stroke:.3px currentColor;">Settings</span>
<span class="t" id="t17" style="left:234.3px;top:14.20px;font-size:11px;line-height:13.20px;color:#9a9a9a;font-weight:400;transform:scaleX(0.9098);-webkit-text-stroke:.3px currentColor;">Search Employee</span>
<span class="t" id="t18" style="left:791px;top:11.20px;font-size:12.5px;line-height:15.00px;color:#3b83d7;font-weight:400;transform:scaleX(0.8863);-webkit-text-stroke:.3px currentColor;">Upgrade</span>
<span class="t" id="t19" style="left:261.5px;top:47.00px;font-size:13.5px;line-height:16.20px;color:#111;font-weight:700;transform:scaleX(0.8745);">Charles Stones, AV111</span>
<span class="t" id="t20" style="left:261.5px;top:72.28px;font-size:11.2px;line-height:13.44px;color:#111;font-weight:400;transform:scaleX(0.9896);-webkit-text-stroke:.3px currentColor;"><b style='font-weight:700;-webkit-text-stroke:0'>CEO</b> - Operations</span>
<span class="t" id="t21" style="left:261.5px;top:95.70px;font-size:11.5px;line-height:13.80px;color:#111;font-weight:400;transform:scaleX(0.9526);-webkit-text-stroke:.3px currentColor;">charles.stones@zylker.com</span>
<span class="t" id="t22" style="left:179.7px;top:131.60px;font-size:12px;line-height:14.40px;color:#111;font-weight:400;transform:scaleX(0.8995);-webkit-text-stroke:.3px currentColor;">Skill Set</span>
<span class="t" id="t23" style="left:235.7px;top:131.60px;font-size:12px;line-height:14.40px;color:#3b83d7;font-weight:400;transform:scaleX(0.8929);-webkit-text-stroke:.3px currentColor;">Goals</span>
<span class="t" id="t24" style="left:280.6px;top:131.60px;font-size:12px;line-height:14.40px;color:#111;font-weight:400;transform:scaleX(0.9108);-webkit-text-stroke:.3px currentColor;">Feedback</span>
<span class="t" id="t25" style="left:344.7px;top:131.60px;font-size:12px;line-height:14.40px;color:#111;font-weight:400;transform:scaleX(0.9293);-webkit-text-stroke:.3px currentColor;">Self Appraisal</span>
<span class="t" id="t26" style="left:180px;top:168.60px;font-size:14.5px;line-height:17.40px;color:#434a52;font-weight:700;transform:scaleX(0.9132);">Goals</span>
<span class="t" id="t27" style="left:888.8px;top:172.50px;font-size:12.5px;line-height:15.00px;color:#fff;font-weight:400;transform:scaleX(0.8825);-webkit-text-stroke:.35px #fff;">Add Goal</span>
<span class="t" id="t28" style="left:180px;top:216.40px;font-size:11.5px;line-height:13.80px;color:#2b2b2b;font-weight:700;transform:scaleX(0.8915);">Goals</span>
<span class="t" id="t29" style="left:460.8px;top:215.60px;font-size:11.5px;line-height:13.80px;color:#2b2b2b;font-weight:700;transform:scaleX(0.9527);">Due Date</span>
<span class="t" id="t30" style="left:559px;top:214.00px;font-size:11.5px;line-height:13.80px;color:#2b2b2b;font-weight:700;transform:scaleX(0.9153);">My Rating</span>
<span class="t" id="t31" style="left:674px;top:213.60px;font-size:11.5px;line-height:13.80px;color:#2b2b2b;font-weight:700;transform:scaleX(0.9224);">Manager's Rating</span>
<span class="t" id="t32" style="left:772.3px;top:213.60px;font-size:11.5px;line-height:13.80px;color:#2b2b2b;font-weight:700;transform:scaleX(0.9086);">Progress</span>
<span class="t" id="t33" style="left:924px;top:213.60px;font-size:11.5px;line-height:13.80px;color:#2b2b2b;font-weight:700;transform:scaleX(0.8829);">Jobs</span>
<span class="t" id="t34" style="left:197.8px;top:249.70px;font-size:12px;line-height:14.40px;color:#3b83d7;font-weight:400;transform:scaleX(0.8829);-webkit-text-stroke:.3px currentColor;">Sales increase</span>
<span class="t" id="t35" style="left:463.8px;top:249.70px;font-size:12px;line-height:14.40px;color:#111;font-weight:400;transform:scaleX(0.9888);-webkit-text-stroke:.3px currentColor;">04-29-2016</span>
<span class="t" id="t36" style="left:677px;top:249.70px;font-size:12px;line-height:14.40px;color:#111;font-weight:400;transform:scaleX(1.0000);-webkit-text-stroke:.3px currentColor;">-</span>
<span class="t" id="t37" style="left:894.5px;top:250.60px;font-size:10.5px;line-height:12.60px;color:#5a5f66;font-weight:400;transform:scaleX(0.8861);-webkit-text-stroke:.3px currentColor;">100%</span>
<span class="t" id="t38" style="left:197.8px;top:291.50px;font-size:12px;line-height:14.40px;color:#3b83d7;font-weight:400;transform:scaleX(0.9221);-webkit-text-stroke:.3px currentColor;">Trade</span>
<span class="t" id="t39" style="left:463.8px;top:291.50px;font-size:12px;line-height:14.40px;color:#111;font-weight:400;transform:scaleX(0.9888);-webkit-text-stroke:.3px currentColor;">01-21-2016</span>
<span class="t" id="t40" style="left:677px;top:291.50px;font-size:12px;line-height:14.40px;color:#111;font-weight:400;transform:scaleX(1.0000);-webkit-text-stroke:.3px currentColor;">-</span>
<span class="t" id="t41" style="left:894.5px;top:293.10px;font-size:10.5px;line-height:12.60px;color:#5a5f66;font-weight:400;transform:scaleX(0.8861);-webkit-text-stroke:.3px currentColor;">100%</span>
<span class="t" id="t42" style="left:197.8px;top:455.80px;font-size:12px;line-height:14.40px;color:#3b83d7;font-weight:400;transform:scaleX(0.9283);-webkit-text-stroke:.3px currentColor;">Lead Generation</span>
<span class="t" id="t43" style="left:463.8px;top:455.80px;font-size:12px;line-height:14.40px;color:#111;font-weight:400;transform:scaleX(0.9888);-webkit-text-stroke:.3px currentColor;">12-17-2015</span>
<span class="t" id="t44" style="left:677px;top:455.80px;font-size:12px;line-height:14.40px;color:#111;font-weight:400;transform:scaleX(1.0000);-webkit-text-stroke:.3px currentColor;">-</span>
<span class="t" id="t45" style="left:894.5px;top:456.70px;font-size:10.5px;line-height:12.60px;color:#5a5f66;font-weight:400;transform:scaleX(0.8861);-webkit-text-stroke:.3px currentColor;">100%</span>
<span class="t" id="t46" style="left:212.7px;top:332.90px;font-size:12px;line-height:14.40px;color:#3b83d7;font-weight:400;transform:scaleX(0.8961);-webkit-text-stroke:.3px currentColor;">PGCPS Support</span>
<span class="t" id="t47" style="left:310.5px;top:332.90px;font-size:12px;line-height:14.40px;color:#111;font-weight:400;transform:scaleX(0.9388);-webkit-text-stroke:.3px currentColor;">5 Hrs 30 Mins</span>
<span class="t" id="t48" style="left:212.7px;top:373.90px;font-size:12px;line-height:14.40px;color:#3b83d7;font-weight:400;transform:scaleX(0.9485);-webkit-text-stroke:.3px currentColor;">TDC Internal Projects</span>
<span class="t" id="t49" style="left:340.5px;top:373.90px;font-size:12px;line-height:14.40px;color:#111;font-weight:400;transform:scaleX(0.9455);-webkit-text-stroke:.3px currentColor;">3 Hrs 20 Mins</span>
<span class="t" id="t50" style="left:212.7px;top:414.70px;font-size:12px;line-height:14.40px;color:#3b83d7;font-weight:400;transform:scaleX(0.9560);-webkit-text-stroke:.3px currentColor;">SOA workflow development</span>
<span class="t" id="t51" style="left:372.5px;top:414.70px;font-size:12px;line-height:14.40px;color:#111;font-weight:400;transform:scaleX(0.9417);-webkit-text-stroke:.3px currentColor;">10 Hrs 30 Mins</span>
<span class="t" id="t52" style="left:940.2px;top:292.90px;font-size:12.5px;line-height:15.00px;color:#3b83d7;font-weight:400;transform:scaleX(0.8793);-webkit-text-stroke:.3px currentColor;">+ Add Job</span>
<span class="t" id="t53" style="left:172px;top:597.60px;font-size:10.5px;line-height:12.60px;color:#6b6b6b;font-weight:400;transform:scaleX(0.8904);-webkit-text-stroke:.3px currentColor;">Here is your Smart Chat ( Ctrl + Space )</span>
<span class="t" id="t54" style="left:976.7px;top:597.00px;font-size:11.5px;line-height:13.80px;color:#fff;font-weight:400;transform:scaleX(0.8057);-webkit-text-stroke:.4px #fff;">Feedback</span>
</div>
</body></html>
